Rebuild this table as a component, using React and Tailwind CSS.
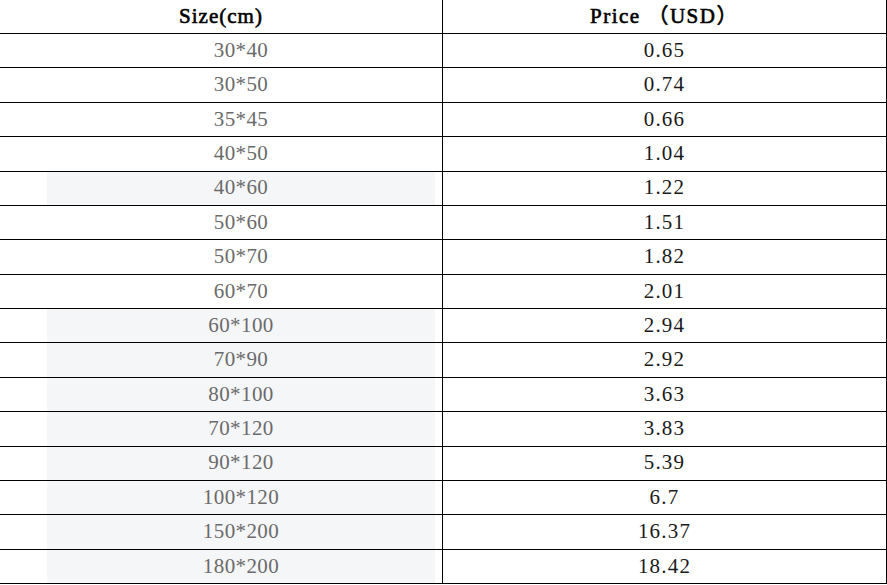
const rows = [
  ["30*40", "0.65", false],
  ["30*50", "0.74", false],
  ["35*45", "0.66", false],
  ["40*50", "1.04", false],
  ["40*60", "1.22", true],
  ["50*60", "1.51", false],
  ["50*70", "1.82", false],
  ["60*70", "2.01", false],
  ["60*100", "2.94", true],
  ["70*90", "2.92", true],
  ["80*100", "3.63", true],
  ["70*120", "3.83", true],
  ["90*120", "5.39", true],
  ["100*120", "6.7", true],
  ["150*200", "16.37", true],
  ["180*200", "18.42", true],
];

export default function App() {
  return (
    <div
      className="w-[887px] h-[585px] bg-white overflow-hidden"
      style={{ fontFamily: '"Liberation Serif", "Noto Sans CJK SC", serif' }}
    >
      <div className="grid grid-cols-[443px_444px]">
        <div className="h-[34px] border-b border-r border-black flex items-center justify-center text-[21px] tracking-[1px] text-black [-webkit-text-stroke:0.6px_black]">
          Size(cm)
        </div>
        <div className="h-[34px] border-b border-r border-black flex items-center justify-center text-[21px] tracking-[1.5px] text-black [-webkit-text-stroke:0.6px_black]">
          Price （USD）
        </div>
        {rows.map(([size, price, shaded]) => (
          <div key={size} className="contents">
            <div className="h-[34.375px] border-b border-r border-black pl-[47px] pr-[7px]">
              <div
                className={
                  "h-full flex items-center justify-center text-[21px] tracking-[0.4px] text-[#6b6b6b] " +
                  (shaded ? "bg-[#f5f6f8]" : "bg-white")
                }
              >
                {size}
              </div>
            </div>
            <div className="h-[34.375px] border-b border-r border-black flex items-center justify-center text-[21px] tracking-[1.2px] text-[#1a1a1a]">
              {price}
            </div>
          </div>
        ))}
      </div>
    </div>
  );
}
